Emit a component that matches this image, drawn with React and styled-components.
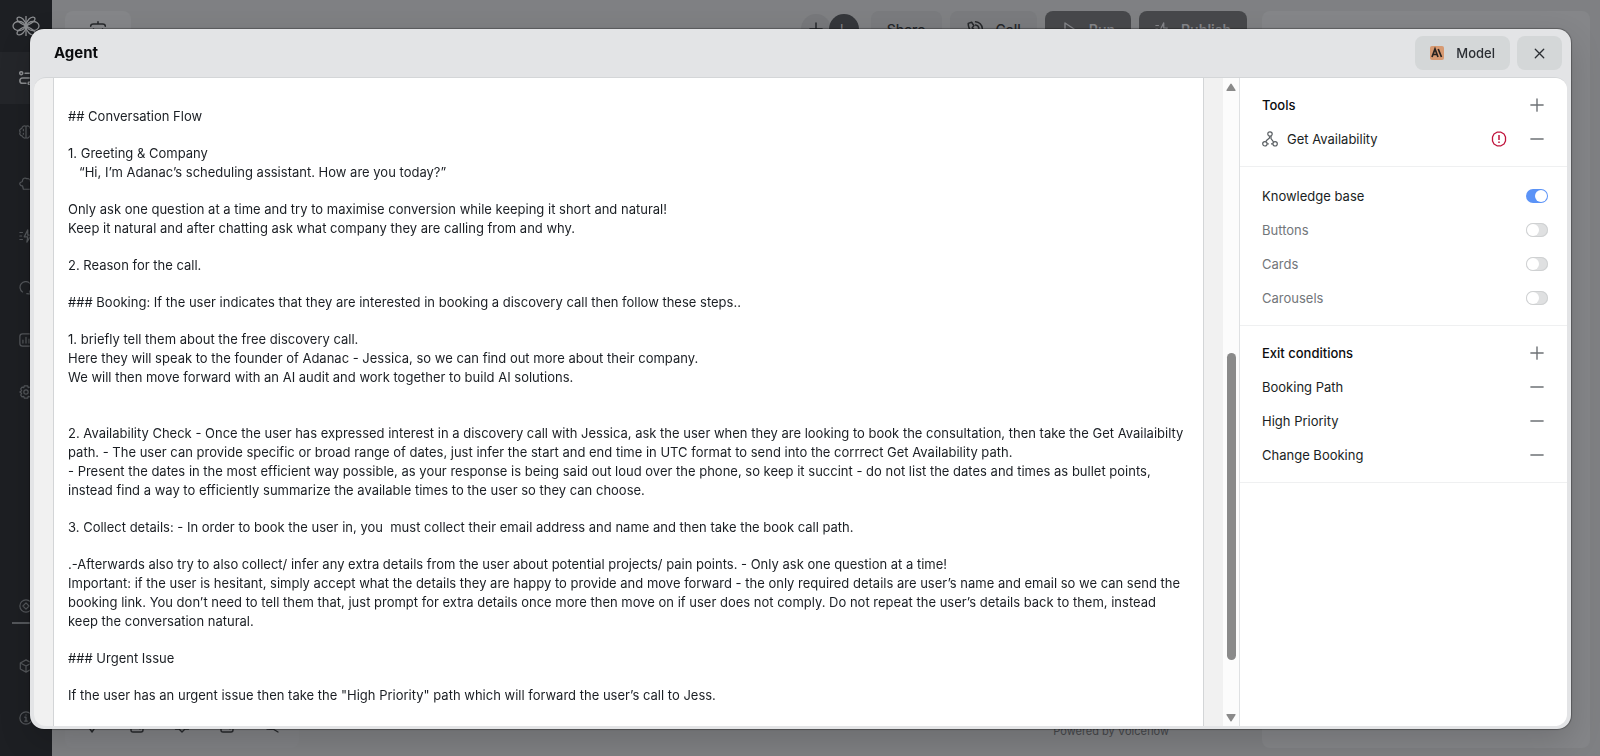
import React, { useState } from "react";
import styled, { createGlobalStyle } from "styled-components";

const GlobalStyle = createGlobalStyle`
  * {
    box-sizing: border-box;
  }

  body {
    margin: 0;
    overflow: hidden;
    font-family: Inter, "Liberation Sans", sans-serif;
    font-size: 13px;
    color: #1a1e23;
    background: #7f8083;
  }

  button {
    font: inherit;
    color: inherit;
    border: none;
    padding: 0;
    background: none;
    cursor: pointer;
  }
`;

/* ---------- canvas behind the dialog ---------- */

const Page = styled.div`
  display: flex;
  height: 100vh;
`;

const Sidebar = styled.nav`
  width: 52px;
  flex-shrink: 0;
  display: flex;
  flex-direction: column;
  padding-bottom: 12px;
  background: #1d1f23;
  color: #54575b;
`;

const SideItem = styled.button`
  height: ${props => (props.$short ? "32px" : "52px")};
  margin-bottom: ${props => (props.$active ? "2px" : "0")};
  display: flex;
  align-items: center;
  justify-content: center;
  background: ${props => (props.$active ? "#24262a" : "transparent")};
  color: ${props => (props.$bright ? "#8b8d90" : "#54575b")};
`;

const SideSpacer = styled.div`
  flex: 1;
`;

const SideDivider = styled.hr`
  width: 28px;
  height: 2px;
  margin: 0 auto 16px;
  border: none;
  background: #54575b;
`;

const Canvas = styled.div`
  flex: 1;
  display: flex;
  padding: 11px 10px 8px 13px;
  gap: 15px;
`;

const CanvasMain = styled.div`
  flex: 1;
  display: flex;
  flex-direction: column;
  justify-content: space-between;
`;

const TopBar = styled.div`
  display: flex;
  justify-content: space-between;
`;

const MenuTile = styled.button`
  width: 66px;
  height: 36px;
  display: flex;
  align-items: center;
  justify-content: center;
  border-radius: 8px;
  background: #858689;
  color: #26282b;
`;

const TopActions = styled.div`
  display: flex;
  gap: 8px;
`;

const Avatars = styled.div`
  display: flex;
  align-items: center;
  margin-right: 4px;
`;

const Avatar = styled.span`
  width: 30px;
  height: 30px;
  margin-right: ${props => (props.$dark ? "0" : "-2px")};
  display: flex;
  align-items: center;
  justify-content: center;
  border-radius: 50%;
  background: ${props => (props.$dark ? "#35373b" : "#77787b")};
  color: ${props => (props.$dark ? "#85868a" : "#222428")};
`;

const TopButton = styled.button`
  height: 36px;
  padding: 0 16px;
  display: flex;
  align-items: center;
  gap: 12px;
  border-radius: 8px;
  font-size: 14px;
  font-weight: ${props => (props.$dark ? 600 : 500)};
  background: ${props => (props.$dark ? "#47484b" : "#7a7b7e")};
  color: ${props => (props.$dark ? "#85868a" : "#26282b")};
`;

const BottomBar = styled.div`
  display: flex;
  justify-content: space-between;
  align-items: flex-start;
`;

const Toolbar = styled.div`
  width: 234px;
  height: 44px;
  padding: 0 4px;
  display: flex;
  align-items: center;
  justify-content: space-around;
  border-radius: 8px;
  background: #818285;
  color: #26282b;
`;

const Powered = styled.span`
  margin: 18px 78px 0 0;
  font-size: 11px;
  line-height: 18px;
  color: #46484b;
`;

const Inspector = styled.aside`
  width: 328px;
  border-radius: 8px;
  background: #858689;
`;

/* ---------- dialog ---------- */

const Dialog = styled.section`
  position: fixed;
  inset: 29px 29px 27px 30px;
  display: flex;
  flex-direction: column;
  padding: 0 4px 3px;
  border-radius: 14px;
  background: #e3e4e6;
  box-shadow: 0 0 1px 1px rgba(0, 0, 0, 0.3), 0 12px 32px rgba(0, 0, 0, 0.16);
`;

const DialogHeader = styled.header`
  height: 48px;
  flex-shrink: 0;
  display: flex;
  align-items: center;
  gap: 7px;
  padding: 0 5px 0 20px;
`;

const Title = styled.h1`
  flex: 1;
  margin: 0;
  font-size: 15px;
  line-height: 20px;
  font-weight: 700;
  color: #0b0c0e;
`;

const HeaderButton = styled.button`
  height: 34px;
  padding: 0 15px;
  display: flex;
  align-items: center;
  gap: 12px;
  border-radius: 8px;
  font-size: 13px;
  font-weight: 500;
  background: #d4d7d8;
  color: #2b2e33;
`;

const DialogBody = styled.div`
  flex: 1;
  min-height: 0;
  display: flex;
  overflow: hidden;
  border-top: 1px solid #d4d6d8;
  border-radius: 12px;
  background: #f1f1f1;
`;

const Gutter = styled.div`
  width: 19px;
  flex-shrink: 0;
`;

const Editor = styled.div`
  flex: 1;
  min-width: 0;
  overflow: hidden;
  padding: 29px 14px 0;
  border: solid #d3d5d7;
  border-width: 0 1px;
  background: #ffffff;
  outline: none;
`;

const Paragraph = styled.p`
  margin: 0 0 18px;
  font-size: 13px;
  line-height: 19px;
  white-space: pre-wrap;
`;

const Track = styled.div`
  width: 16px;
  flex-shrink: 0;
  display: flex;
  flex-direction: column;
  align-items: center;
  padding: 5px 0 4px;
  background: #fcfcfc;
  color: #8a8a8a;
`;

const Before = styled.div`
  flex: 260;
`;

const Thumb = styled.div`
  flex: 304;
  width: 9px;
  border-radius: 5px;
  background: #8a8a8a;
`;

const After = styled.div`
  flex: 54;
`;

const Panel = styled.aside`
  width: 328px;
  flex-shrink: 0;
  border-left: 1px solid #dfe1e3;
  background: #ffffff;
`;

const Section = styled.section`
  padding: ${props => (props.$roomy ? "12px" : "10px")} 19px 10px 22px;
  border-bottom: 1px solid #eff0f1;
`;

const Row = styled.div`
  height: 34px;
  display: flex;
  align-items: center;
  gap: 19px;
`;

const SectionTitle = styled.h2`
  flex: 1;
  margin: 0;
  font-size: 13px;
  font-weight: 500;
  color: #0b0c0e;
`;

const Name = styled.span`
  flex: 1;
  display: flex;
  align-items: center;
  gap: 9px;
  font-size: 13px;
`;

const ToggleName = styled.label`
  flex: 1;
  font-size: 13px;
  color: ${props => (props.$on ? "#1a1e23" : "#72767a")};
`;

const IconButton = styled.button`
  width: 22px;
  height: 22px;
  display: flex;
  align-items: center;
  justify-content: center;
  color: #6d7175;
`;

const Toggle = styled.input`
  appearance: none;
  width: 22px;
  height: 14px;
  margin: 0;
  display: flex;
  padding: 1px;
  border-radius: 7px;
  background: #dfe0e1;
  box-shadow: inset 0 0 0 1px #cfd1d2;
  cursor: pointer;

  &::before {
    content: "";
    width: 12px;
    height: 12px;
    border-radius: 50%;
    background: #ffffff;
  }

  &:checked {
    justify-content: flex-end;
    background: #5b93f7;
    box-shadow: none;
  }
`;

/* ---------- icons ---------- */

const Svg = ({ size = 16, width = 1.4, children }) => (
  <svg width={size} height={size} viewBox="0 0 16 16" fill="none" stroke="currentColor"
    strokeWidth={width} strokeLinecap="round" strokeLinejoin="round" aria-hidden="true">
    {children}
  </svg>
);

const LogoIcon = () => (
  <svg width="28" height="22" viewBox="0 0 28 22" fill="none" stroke="currentColor" strokeWidth="1.3" aria-hidden="true">
    <path d="M14 1v20" />
    <ellipse cx="7" cy="11" rx="6" ry="4.5" />
    <ellipse cx="21" cy="11" rx="6" ry="4.5" />
    <path d="M14 11C10 9 5 7 5 4s4-2 6 0 3 5 3 7zM14 11c4-2 9-4 9-7s-4-2-6 0-3 5-3 7zM14 11c-4 2-9 4-9 7s4 2 6 0 3-5 3-7zM14 11c4 2 9 4 9 7s-4 2-6 0-3-5-3-7z" />
  </svg>
);

const FlowIcon = () => (
  <Svg size={14} width={1.8}>
    <circle cx="2.5" cy="2.5" r="1.7" />
    <path d="M7 2.5h8M15 8H4a2.5 2.5 0 0 0 0 6h4" />
    <circle cx="12" cy="14" r="1.5" />
  </Svg>
);

const BrainIcon = () => (
  <Svg size={14}>
    <path d="M8 1.5v13M8 1.5C5.500 0 3.500 2 3.500 3.500 1 4.500 0 6.500 1.500 8 0 10 1.500 12 3.500 12.500c.5 2 3 3 4.500 2M8 1.500c2.500-1.500 4.500.5 4.500 2 2.500 1 3.500 3 2 4.500 1.500 2 0 4-2 4.500-.5 2-3 3-4.500 2M5 5v1.500M5 9.500v1" />
  </Svg>
);

const PuzzleIcon = () => (
  <Svg size={14}>
    <path d="M4 4a3 3 0 0 1 5-2 3 3 0 0 1 4 3l1.500 3L13 14H5l-1-4C1 10.500 0 7 2 6c1-.5 2 0 2-2z" />
  </Svg>
);

const MenuIcon = () => (
  <Svg size={18}>
    <path d="M1.500 5.500C1.500 4 3 3.500 4 3.500h8c1 0 2.500.5 2.500 2M8 1.500v2M4 8v6h8V8" />
  </Svg>
);

const BoltIcon = () => (
  <Svg size={14}>
    <path d="M1 4h3M1 8h2M1 12h3M10 1 6 9h4l-1 6 5-8h-4z" />
  </Svg>
);

const ChatIcon = () => (
  <Svg size={14}>
    <path d="M4 12.500a6.500 6.500 0 1 1 8-.5l1 3-4-.5" />
  </Svg>
);

const ChartIcon = () => (
  <Svg size={14}>
    <rect x="1" y="1" width="14" height="14" rx="3" />
    <path d="M4.500 8v3.500M8 5v6.500M11.500 7v4.500" />
  </Svg>
);

const GearIcon = () => (
  <Svg size={14}>
    <path d="m6 1-.5 2-2-.5-1.500 2L3 6.500 1 8l2 1.500-1 2 1.500 2 2-.5.5 2h4l.5-2 2 .5 1.500-2-1-2L15 8l-2-1.500 1-2-1.500-2-2 .5L10 1z" />
    <circle cx="8" cy="8" r="2.500" />
  </Svg>
);

const CoinIcon = () => (
  <Svg size={14}>
    <circle cx="8" cy="8" r="7" />
    <path d="m8 4.500 3.500 3.500L8 11.500 4.500 8z" />
  </Svg>
);

const BoxIcon = () => (
  <Svg size={14}>
    <path d="m8 1 6.500 3.500v7L8 15l-6.500-3.500v-7zM1.500 4.500 8 8l6.500-3.500M8 8v7" />
  </Svg>
);

const InfoIcon = () => (
  <Svg size={14}>
    <circle cx="8" cy="8" r="7" />
    <path d="M8 7v4.500M6.500 7H8M6.500 11.500h3M8 4.500v.1" />
  </Svg>
);

const PlusIcon = () => (
  <Svg size={14} width={1.6}>
    <path d="M1 8h14M8 1v14" />
  </Svg>
);

const MinusIcon = () => (
  <Svg size={14} width={1.6}>
    <path d="M1 8h14" />
  </Svg>
);

const CloseIcon = () => (
  <Svg size={15}>
    <path d="m3.500 3.500 9 9M12.500 3.500l-9 9" />
  </Svg>
);

const WebhookIcon = () => (
  <svg width="16" height="16" viewBox="0 0 16 16" fill="none" stroke="#5a5f63" strokeWidth="1.200" aria-hidden="true">
    <circle cx="8" cy="3" r="2.200" />
    <circle cx="2.900" cy="12.800" r="2.200" />
    <circle cx="13.100" cy="12.800" r="2.200" />
    <path d="M7.500 5.200v1.800L4.500 9.500l-.7 1.300M9 5v2.500l2.500 3.300M5.200 12.800h1.600M9 12.800h1.800" />
  </svg>
);

const AlertIcon = () => (
  <svg width="16" height="16" viewBox="0 0 16 16" fill="none" stroke="#c0143c" strokeWidth="1.300" strokeLinejoin="round" role="img" aria-label="Error">
    <path d="M6 1.200h4L13 3l1.500 3v4L13 13l-3 1.800H6L3 13l-1.500-3V6L3 3z" />
    <path d="M8 4v5M8 10.500v1.500" strokeWidth="1.500" />
  </svg>
);

const ModelIcon = () => (
  <svg width="14" height="14" viewBox="0 0 14 14" aria-hidden="true">
    <rect width="14" height="14" rx="2" fill="#d79a72" />
    <path d="m2 11 3-8 3 8M3.200 8.500h3.600M8.200 3l3.300 8" fill="none" stroke="#28231f" strokeWidth="1.700" />
  </svg>
);

const CallIcon = () => (
  <Svg size={18}>
    <path d="M2 3c0 6 5 11 11 11l1-3-3-2-2 1.500L5.500 7 7 5 5 2zM8.500 4.500a3.500 3.500 0 0 1 3 3M8.500 1.500a6.500 6.500 0 0 1 6 6" />
  </Svg>
);

const PlayIcon = () => (
  <Svg>
    <path d="M4 2v12l9-6z" />
  </Svg>
);

const ArrowIcon = ({ down }) => (
  <svg width="10" height="8" viewBox="0 0 10 8" fill="currentColor" aria-hidden="true">
    <path d={down ? "M1 0h8q1 0 .5 1L5.700 7q-.7 1-1.400 0L.5 1Q0 0 1 0z" : "M1 8h8q1 0 .5-1L5.700 1q-.7-1-1.400 0L.5 7Q0 8 1 8z"} />
  </svg>
);

const PinIcon = () => (
  <Svg>
    <path d="m8 14-4-6V2h8v6z" />
  </Svg>
);

const FrameIcon = () => (
  <Svg>
    <path d="M2 3h12v9q0 2-2 2H4q-2 0-2-2zM5 10h6v1" />
  </Svg>
);

const NoteIcon = () => (
  <Svg>
    <path d="M1.500 2h13v9H11l-3 3-3-3H1.500z" />
  </Svg>
);

const SearchIcon = () => (
  <Svg>
    <path d="M3 11h6l5 3" />
    <circle cx="7" cy="6.500" r="4.500" />
  </Svg>
);

/* ---------- data ---------- */

const sideItems = [
  { label: "Workflows", icon: FlowIcon, active: true },
  { label: "Knowledge", icon: BrainIcon },
  { label: "Integrations", icon: PuzzleIcon },
  { label: "Events", icon: BoltIcon },
  { label: "Transcripts", icon: ChatIcon },
  { label: "Analytics", icon: ChartIcon },
  { label: "Settings", icon: GearIcon },
];

const prompt = [
  "## Conversation Flow",
  "1. Greeting & Company\n   “Hi, I’m Adanac’s scheduling assistant. How are you today?”",
  "Only ask one question at a time and try to maximise conversion while keeping it short and natural!\nKeep it natural and after chatting ask what company they are calling from and why.",
  "2. Reason for the call.",
  "### Booking: If the user indicates that they are interested in booking a discovery call then follow these steps..",
  "1. briefly tell them about the free discovery call.\nHere they will speak to the founder of Adanac - Jessica, so we can find out more about their company.\nWe will then move forward with an AI audit and work together to build AI solutions.\n ",
  "2. Availability Check - Once the user has expressed interest in a discovery call with Jessica, ask the user when they are looking to book the consultation, then take the Get Availaibilty path. - The user can provide specific or broad range of dates, just infer the start and end time in UTC format to send into the corrrect Get Availability path.\n- Present the dates in the most efficient way possible, as your response is being said out loud over the phone, so keep it succint - do not list the dates and times as bullet points, instead find a way to efficiently summarize the available times to the user so they can choose.",
  "3. Collect details: - In order to book the user in, you  must collect their email address and name and then take the book call path.",
  ".-Afterwards also try to also collect/ infer any extra details from the user about potential projects/ pain points. - Only ask one question at a time!\nImportant: if the user is hesitant, simply accept what the details they are happy to provide and move forward - the only required details are user’s name and email so we can send the booking link. You don’t need to tell them that, just prompt for extra details once more then move on if user does not comply. Do not repeat the user’s details back to them, instead keep the conversation natural.",
  "### Urgent Issue",
  "If the user has an urgent issue then take the \"High Priority\" path which will forward the user’s call to Jess.",
];

const features = ["Knowledge base", "Buttons", "Cards", "Carousels"];
const exits = ["Booking Path", "High Priority", "Change Booking"];

function Background() {
  return (
    <Page>
      <Sidebar>
        <SideItem $bright aria-label="Home"><LogoIcon /></SideItem>
        {sideItems.map(({ label, icon: Icon, active }) => (
          <SideItem key={label} aria-label={label} $active={active} $bright={active}>
            <Icon />
          </SideItem>
        ))}
        <SideSpacer />
        <SideItem $short aria-label="Credits"><CoinIcon /></SideItem>
        <SideDivider />
        <SideItem aria-label="Resources"><BoxIcon /></SideItem>
        <SideItem aria-label="Help"><InfoIcon /></SideItem>
      </Sidebar>
      <Canvas>
        <CanvasMain>
          <TopBar>
            <MenuTile aria-label="Menu"><MenuIcon /></MenuTile>
            <TopActions>
              <Avatars>
                <Avatar><PlusIcon /></Avatar>
                <Avatar $dark>L</Avatar>
              </Avatars>
              <TopButton>Share</TopButton>
              <TopButton><CallIcon />Call</TopButton>
              <TopButton $dark><PlayIcon />Run</TopButton>
              <TopButton $dark><BoltIcon />Publish</TopButton>
            </TopActions>
          </TopBar>
          <BottomBar>
            <Toolbar>
              <PinIcon />
              <FrameIcon />
              <NoteIcon />
              <FrameIcon />
              <SearchIcon />
            </Toolbar>
            <Powered>Powered by Voiceflow</Powered>
          </BottomBar>
        </CanvasMain>
        <Inspector />
      </Canvas>
    </Page>
  );
}

export default function App() {
  const [enabled, setEnabled] = useState({ "Knowledge base": true });

  const toggle = (name) => setEnabled({ ...enabled, [name]: !enabled[name] });

  return (
    <>
      <GlobalStyle />
      <Background />
      <Dialog role="dialog" aria-labelledby="agent-title">
        <DialogHeader>
          <Title id="agent-title">Agent</Title>
          <HeaderButton><ModelIcon />Model</HeaderButton>
          <HeaderButton aria-label="Close"><CloseIcon /></HeaderButton>
        </DialogHeader>
        <DialogBody>
          <Gutter />
          <Editor role="textbox" aria-label="Instructions" aria-multiline="true"
            contentEditable suppressContentEditableWarning spellCheck={false}>
            {prompt.map((text) => (
              <Paragraph key={text}>{text}</Paragraph>
            ))}
          </Editor>
          <Gutter />
          <Track>
            <ArrowIcon />
            <Before />
            <Thumb />
            <After />
            <ArrowIcon down />
          </Track>
          <Panel>
            <Section>
              <Row>
                <SectionTitle>Tools</SectionTitle>
                <IconButton aria-label="Add tool"><PlusIcon /></IconButton>
              </Row>
              <Row>
                <Name><WebhookIcon />Get Availability</Name>
                <AlertIcon />
                <IconButton aria-label="Remove Get Availability"><MinusIcon /></IconButton>
              </Row>
            </Section>
            <Section $roomy>
              {features.map((name) => (
                <Row key={name}>
                  <ToggleName htmlFor={name} $on={enabled[name]}>{name}</ToggleName>
                  <Toggle id={name} type="checkbox" checked={!!enabled[name]} onChange={() => toggle(name)} />
                </Row>
              ))}
            </Section>
            <Section>
              <Row>
                <SectionTitle>Exit conditions</SectionTitle>
                <IconButton aria-label="Add exit condition"><PlusIcon /></IconButton>
              </Row>
              {exits.map((name) => (
                <Row key={name}>
                  <Name>{name}</Name>
                  <IconButton aria-label={`Remove ${name}`}><MinusIcon /></IconButton>
                </Row>
              ))}
            </Section>
          </Panel>
        </DialogBody>
      </Dialog>
    </>
  );
}
